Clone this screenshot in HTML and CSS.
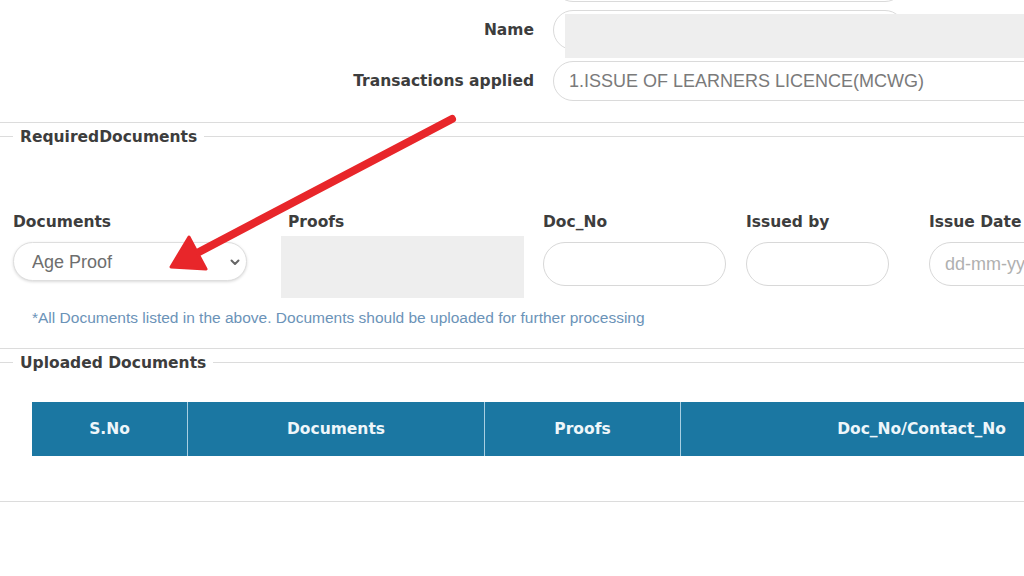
FILE: index.html
```html
<!DOCTYPE html>
<html lang="en">
<head>
  <meta charset="UTF-8">
  <meta name="viewport" content="width=device-width, initial-scale=1.0">
  <title>Required Documents</title>
  <link rel="stylesheet" href="styles.css">
</head>
<body>

  <div class="top-form">
    <div class="form-row row-cut">
      <label class="row-label"></label>
      <div class="field-wrap"><input class="text-input short" type="text"></div>
    </div>
    <div class="form-row row-name">
      <label class="row-label">Name</label>
      <div class="field-wrap">
        <input class="text-input short" type="text">
        <div class="redact"></div>
      </div>
    </div>
    <div class="form-row row-trans">
      <label class="row-label">Transactions applied</label>
      <div class="field-wrap"><input class="text-input wide" type="text" value="1.ISSUE OF LEARNERS LICENCE(MCWG)" readonly></div>
    </div>
  </div>

  <fieldset class="box box-required">
    <legend>RequiredDocuments</legend>
    <div class="doc-row">
      <div class="doc-field">
        <label>Documents</label>
        <div class="select-wrap">
          <select class="doc-select">
            <option>Age Proof</option>
          </select>
          <svg class="chevron" width="10" height="7" viewBox="0 0 10 7"><path d="M1.5 1.5 L5 5 L8.5 1.5" fill="none" stroke="#666" stroke-width="2" stroke-linecap="round" stroke-linejoin="round"/></svg>
        </div>
      </div>
      <div class="doc-field">
        <label>Proofs</label>
        <div class="proof-box"></div>
      </div>
      <div class="doc-field">
        <label>Doc_No</label>
        <input class="round-input w-doc" type="text">
      </div>
      <div class="doc-field">
        <label>Issued by</label>
        <input class="round-input w-issued" type="text">
      </div>
      <div class="doc-field">
        <label>Issue Date</label>
        <input class="round-input w-date" type="text" placeholder="dd-mm-yyyy">
      </div>
    </div>
    <p class="note">*All Documents listed in the above. Documents should be uploaded for further processing</p>
  </fieldset>

  <fieldset class="box box-uploaded">
    <legend>Uploaded Documents</legend>
    <table class="doc-table">
      <thead>
        <tr>
          <th class="c-sno">S.No</th>
          <th class="c-doc">Documents</th>
          <th class="c-proof">Proofs</th>
          <th class="c-no">Doc_No/Contact_No</th>
        </tr>
      </thead>
    </table>
  </fieldset>

  <!-- annotation arrow drawn over the page -->
  <svg class="arrow" width="1024" height="576" viewBox="0 0 1024 576">
    <line x1="452" y1="119" x2="199" y2="252" stroke="#e8262a" stroke-width="8" stroke-linecap="round"/>
    <polygon points="171,267 189,237 206,269" fill="#e8262a" stroke="#e8262a" stroke-width="3" stroke-linejoin="round"/>
  </svg>

</body>
</html>
```

FILE: styles.css
```css
html, body {
  overflow: hidden;
}
body {
  margin: 0;
  width: 1024px;
  height: 576px;
  position: relative;
  background: #fff;
  font-family: "DejaVu Sans", Verdana, sans-serif;
  color: #3d3d3d;
}

/* ---- top form ---- */
.top-form {
  margin-top: -38px;
  padding-bottom: 21px;
  border-bottom: 1px solid #dcdcdc;
}
.form-row {
  display: grid;
  grid-template-columns: 534px 1fr;
  column-gap: 19px;
  align-items: center;
  margin-top: 13px;
}
.form-row.row-cut { margin-top: 0; }
.form-row.row-name { margin-top: 8px; }
.form-row.row-trans { margin-top: 11px; }
.row-label {
  text-align: right;
  font-weight: bold;
  font-size: 15.5px;
}
.field-wrap {
  position: relative;
}
.text-input {
  box-sizing: border-box;
  height: 40px;
  border: 1.5px solid #dadada;
  border-radius: 20px;
  padding: 0 15px;
  font-family: "Liberation Sans", Arial, sans-serif;
  font-size: 18px;
  color: #7a7a7a;
  background: #fff;
  outline: none;
}
.text-input.short { width: 352px; }
.text-input.wide { width: 560px; }
.redact {
  position: absolute;
  left: 12px;
  top: 4px;
  width: 470px;
  height: 44px;
  background: #eeeeee;
}

/* ---- fieldsets ---- */
.box {
  margin: 3px -10px 0;
  border: 1px solid #dcdcdc;
  border-left: none;
  border-right: none;
  padding: 0 0 0 23px;
  min-width: 0;
}
.box legend {
  padding: 2px 7px 0;
  font-weight: bold;
  font-size: 15.5px;
  line-height: 18px;
  color: #3d3d3d;
}
.box-required {
  padding-top: 67px;
  padding-bottom: 22px;
}
.box-uploaded {
  padding-top: 30px;
  padding-bottom: 45px;
}

.doc-row {
  display: grid;
  grid-template-columns: 275px 255px 203px 183px 1fr;
  align-items: start;
}
.doc-field label {
  display: block;
  font-weight: bold;
  font-size: 15.5px;
  line-height: 18px;
  margin-bottom: 11px;
}
.select-wrap {
  position: relative;
  width: 234px;
}
.doc-select {
  appearance: none;
  -webkit-appearance: none;
  box-sizing: border-box;
  width: 234px;
  height: 39px;
  border: 1px solid #dedede;
  border-radius: 20px;
  box-shadow: 0 1px 3px rgba(0, 0, 0, 0.15);
  padding: 0 30px 0 18px;
  background: #fff;
  font-family: "Liberation Sans", Arial, sans-serif;
  font-size: 18px;
  color: #6e6e6e;
}
.chevron {
  position: absolute;
  right: 7px;
  top: 17px;
}
.proof-box {
  width: 243px;
  height: 62px;
  margin: -6px 0 0 -7px;
  background: #eeeeee;
}
.round-input {
  box-sizing: border-box;
  height: 44px;
  border: 1.5px solid #d8d8d8;
  border-radius: 22px;
  padding: 0 15px;
  font-family: "Liberation Sans", Arial, sans-serif;
  font-size: 18px;
  color: #777;
  background: #fff;
  outline: none;
}
.round-input::placeholder { color: #b0b0b0; }
.w-doc { width: 183px; }
.w-issued { width: 143px; }
.w-date { width: 200px; }

.note {
  margin: 11px 0 0 19px;
  font-family: "Liberation Sans", Arial, sans-serif;
  font-size: 15.5px;
  line-height: 17px;
  color: #6b93b8;
  white-space: nowrap;
}

/* ---- table ---- */
.doc-table {
  margin-left: 19px;
  border-collapse: collapse;
  width: 1130px;
  table-layout: fixed;
}
.doc-table th {
  height: 54px;
  padding: 0;
  background: #1b77a2;
  color: #eef6fa;
  font-weight: bold;
  font-size: 15.5px;
  text-align: center;
  border-left: 1px solid #a8cfe2;
}
.doc-table th:first-child { border-left: none; }
.c-sno { width: 155px; }
.c-doc { width: 296px; }
.c-proof { width: 195px; }

/* ---- annotation ---- */
.arrow {
  position: absolute;
  left: 0;
  top: 0;
  pointer-events: none;
}
```
